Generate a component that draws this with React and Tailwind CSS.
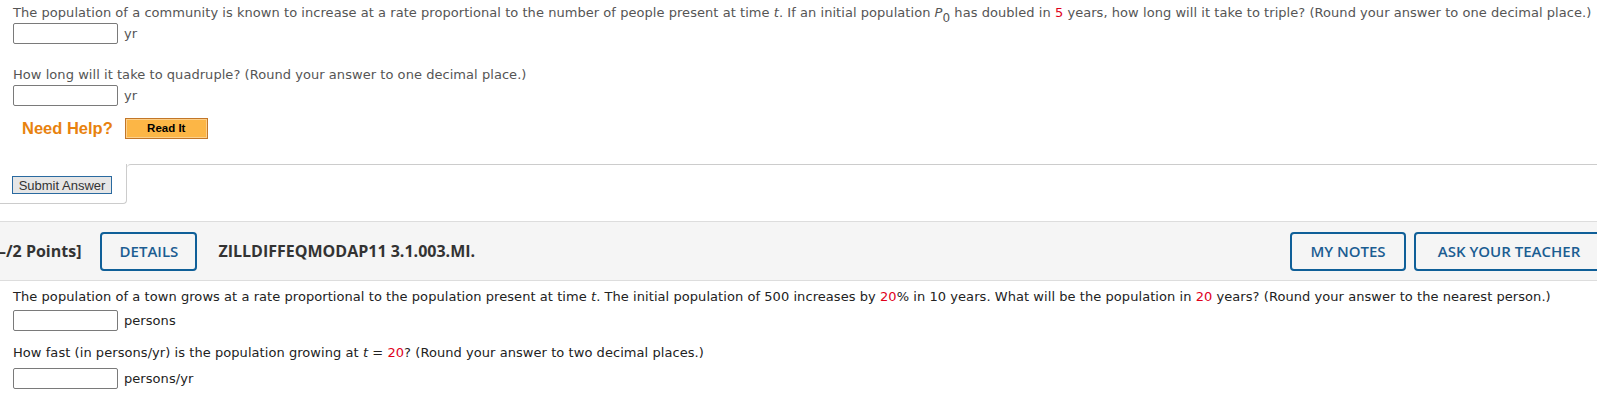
export default function App() {
  return (
    <div className="w-[1597px] h-[401px] overflow-hidden bg-white">
      {/* first question */}
      <div className="pl-[13px] pt-[4px] text-[13px] leading-[18px] tracking-[0.05px] font-['DejaVu_Sans',Verdana,sans-serif] text-[#555]">
        <p className="whitespace-nowrap">
          The population of a community is known to increase at a rate proportional to the number of people present at time <i>t</i>. If an initial population <i>P</i>
          <sub className="text-[12px] -bottom-[5px]">0</sub> has doubled in <span className="text-[#e0001b]">5</span> years, how long will it take to triple? (Round your answer to one decimal place.)
        </p>
        <div className="mt-[1px] flex items-center gap-[6px]">
          <input className="w-[105px] h-[21px] border border-[#7a7a7a] rounded-[2px] bg-white" />
          <span>yr</span>
        </div>
        <p className="mt-[22px] whitespace-nowrap">How long will it take to quadruple? (Round your answer to one decimal place.)</p>
        <div className="mt-[1px] flex items-center gap-[6px]">
          <input className="w-[105px] h-[21px] border border-[#7a7a7a] rounded-[2px] bg-white" />
          <span>yr</span>
        </div>
        <div className="mt-[12px] ml-[9px] flex items-center gap-[12px] tracking-normal">
          <span className="font-['Liberation_Sans',Arial,sans-serif] font-bold text-[16.5px] leading-[21px] text-[#e8820e]">Need Help?</span>
          <button className="w-[83px] h-[21px] border border-[#c27628] bg-[#fcb646] shadow-[inset_0_0_0_1px_#fdd08a] font-['Liberation_Sans',Arial,sans-serif] font-bold text-[11.5px] leading-none text-black">
            Read It
          </button>
        </div>
      </div>

      {/* submit area */}
      <div className="mt-[25px] flex">
        <div className="w-[127px] h-[40px] border-r border-b border-[#cccccc] rounded-br-[4px] pl-[12px] pt-[12px] flex items-start">
          <button className="w-[100px] h-[18px] border border-[#2a6aa0] bg-[#e6e6e6] font-['Liberation_Sans',Arial,sans-serif] text-[13px] leading-none text-[#333]">
            Submit Answer
          </button>
        </div>
        <div className="flex-1 border-t border-[#cccccc] rounded-tl-[4px]" />
      </div>

      {/* question header bar */}
      <div className="mt-[17px] h-[60px] border-y border-[#dddddd] bg-[#f5f5f5] flex items-center font-['Open_Sans',sans-serif] text-[15px]">
        <span className="-ml-[2px] font-bold text-[16px] text-[#333] whitespace-nowrap">–/2 Points]</span>
        <button className="ml-[19px] w-[97px] h-[39px] border-2 border-[#0f5f98] rounded-[4px] font-semibold text-[#1b5d92]">DETAILS</button>
        <span className="ml-[21px] font-bold text-[16px] text-[#333] whitespace-nowrap">ZILLDIFFEQMODAP11 3.1.003.MI.</span>
        <div className="ml-auto -mr-[7px] flex gap-[8px]">
          <button className="w-[116px] h-[39px] border-2 border-[#0f5f98] rounded-[4px] font-semibold text-[#1b5d92] whitespace-nowrap">MY NOTES</button>
          <button className="w-[190px] h-[39px] border-2 border-[#0f5f98] rounded-[4px] font-semibold text-[#1b5d92] whitespace-nowrap">ASK YOUR TEACHER</button>
        </div>
      </div>

      {/* second question */}
      <div className="pl-[13px] text-[13px] leading-[18px] tracking-[0.06px] font-['DejaVu_Sans',Verdana,sans-serif] text-[#222]">
        <p className="mt-[7px] whitespace-nowrap">
          The population of a town grows at a rate proportional to the population present at time <i>t</i>. The initial population of 500 increases by <span className="text-[#e0001b]">20</span>% in 10 years. What will be the population in <span className="text-[#e0001b]">20</span> years? (Round your answer to the nearest person.)
        </p>
        <div className="mt-[4px] flex items-center gap-[6px]">
          <input className="w-[105px] h-[21px] border border-[#7a7a7a] rounded-[2px] bg-white" />
          <span>persons</span>
        </div>
        <p className="mt-[13px] whitespace-nowrap">
          How fast (in persons/yr) is the population growing at <i>t</i> = <span className="text-[#e0001b]">20</span>? (Round your answer to two decimal places.)
        </p>
        <div className="mt-[6px] flex items-center gap-[6px]">
          <input className="w-[105px] h-[21px] border border-[#7a7a7a] rounded-[2px] bg-white" />
          <span>persons/yr</span>
        </div>
      </div>
    </div>
  );
}
